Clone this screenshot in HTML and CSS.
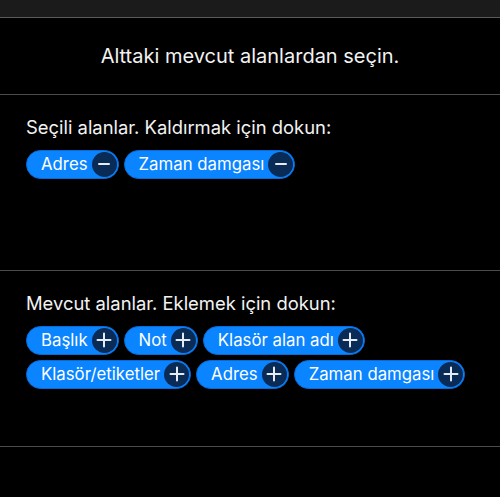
FILE: index.html
```html
<!DOCTYPE html>
<html lang="tr">
<head>
<meta charset="utf-8">
<link rel="stylesheet" href="styles.css">
</head>
<body>
<div class="topbar"></div>
<div class="header">Alttaki mevcut alanlardan seçin.</div>
<section class="section">
  <div class="title">Seçili alanlar. Kaldırmak için dokun:</div>
  <div class="chips">
    <span class="chip">Adres<span class="btn"><svg viewBox="0 0 24 24"><path d="M7 12h10"/></svg></span></span>
    <span class="chip">Zaman damgası<span class="btn"><svg viewBox="0 0 24 24"><path d="M7 12h10"/></svg></span></span>
  </div>
</section>
<section class="section">
  <div class="title">Mevcut alanlar. Eklemek için dokun:</div>
  <div class="chips">
    <span class="chip">Başlık<span class="btn"><svg viewBox="0 0 24 24"><path d="M5.5 12h13M12 5.5v13"/></svg></span></span>
    <span class="chip">Not<span class="btn"><svg viewBox="0 0 24 24"><path d="M5.5 12h13M12 5.5v13"/></svg></span></span>
    <span class="chip">Klasör alan adı<span class="btn"><svg viewBox="0 0 24 24"><path d="M5.5 12h13M12 5.5v13"/></svg></span></span>
    <span class="chip">Klasör/etiketler<span class="btn"><svg viewBox="0 0 24 24"><path d="M5.5 12h13M12 5.5v13"/></svg></span></span>
    <span class="chip">Adres<span class="btn"><svg viewBox="0 0 24 24"><path d="M5.5 12h13M12 5.5v13"/></svg></span></span>
    <span class="chip">Zaman damgası<span class="btn"><svg viewBox="0 0 24 24"><path d="M5.5 12h13M12 5.5v13"/></svg></span></span>
  </div>
</section>
</body>
</html>
```
FILE: styles.css
```css
html, body {
  margin: 0;
  padding: 0;
  background: #000;
  color: #f2f2f2;
  font-family: Inter, "Liberation Sans", sans-serif;
}
.topbar {
  height: 17px;
  background: #1b1b1b;
  border-bottom: 1.5px solid #5a5a5a;
}
.header {
  height: 76.5px;
  display: flex;
  align-items: center;
  justify-content: center;
  font-size: 20px;
  border-bottom: 1.5px solid #4c4c4c;
  box-sizing: border-box;
}
.section {
  height: 176px;
  box-sizing: border-box;
  padding: 20px 26px 0;
  border-bottom: 1.5px solid #4c4c4c;
}
.title {
  font-size: 18.4px;
  line-height: 24px;
  margin-bottom: 11px;
}
.chips {
  display: flex;
  flex-wrap: wrap;
  gap: 5px 5px;
}
.chip {
  display: inline-flex;
  align-items: center;
  height: 29px;
  box-sizing: border-box;
  padding: 0 1px 0 14px;
  border-radius: 15px;
  background: #0a84ff;
  border: 1px solid #0a6ad6;
  font-size: 16.8px;
  color: #fff;
}
.btn {
  width: 25px;
  height: 25px;
  margin-left: 4px;
  border-radius: 50%;
  background: #0b2b57;
  display: inline-flex;
  align-items: center;
  justify-content: center;
}
.btn svg {
  width: 24px;
  height: 24px;
  fill: none;
  stroke: #e6ecf4;
  stroke-width: 2;
  stroke-linecap: round;
}
```
